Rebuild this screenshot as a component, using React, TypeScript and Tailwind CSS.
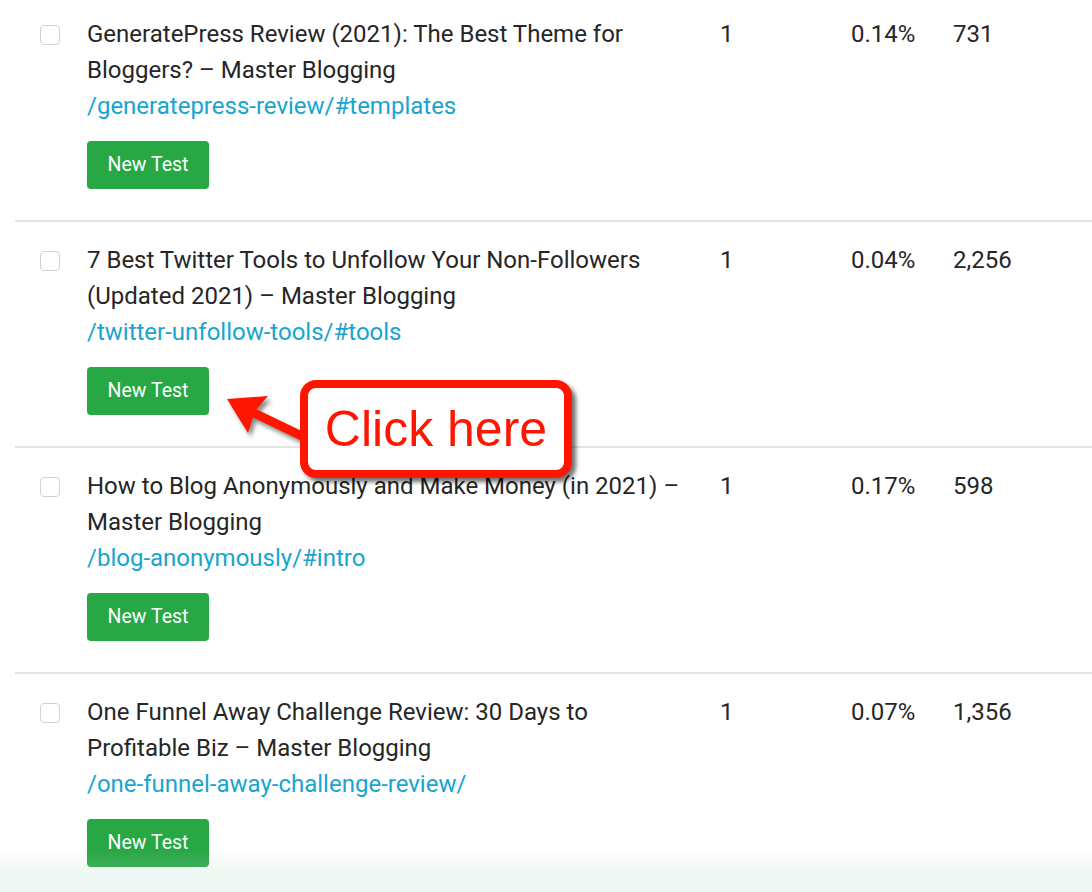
import React from 'react';

interface Post {
  title: string;
  path: string;
  count: string;
  ctr: string;
  views: string;
}

const posts: Post[] = [
  {
    title: 'GeneratePress Review (2021): The Best Theme for Bloggers? – Master Blogging',
    path: '/generatepress-review/#templates',
    count: '1',
    ctr: '0.14%',
    views: '731',
  },
  {
    title: '7 Best Twitter Tools to Unfollow Your Non-Followers (Updated 2021) – Master Blogging',
    path: '/twitter-unfollow-tools/#tools',
    count: '1',
    ctr: '0.04%',
    views: '2,256',
  },
  {
    title: 'How to Blog Anonymously and Make Money (in 2021) – Master Blogging',
    path: '/blog-anonymously/#intro',
    count: '1',
    ctr: '0.17%',
    views: '598',
  },
  {
    title: 'One Funnel Away Challenge Review: 30 Days to Profitable Biz – Master Blogging',
    path: '/one-funnel-away-challenge-review/',
    count: '1',
    ctr: '0.07%',
    views: '1,356',
  },
];

function PostRow({ post }: { post: Post }) {
  return (
    <div className="flex border-t-2 border-[#e4e4e4] pt-[20px] pb-[31px] text-[24px] leading-[36px] text-[#262626]">
      <div className="w-[72px] shrink-0 pl-[25px]">
        <div className="mt-[9px] h-[20px] w-[20px] rounded-[4px] border border-[#d2d2d2] bg-white" />
      </div>
      <div className="w-[633px] shrink-0">
        <div className="w-[600px]">{post.title}</div>
        <div className="text-[#17a5cf]">{post.path}</div>
        <button className="mt-[17px] flex h-[48px] w-[122px] items-center justify-center rounded-[4px] bg-[#28a745] text-[19.5px] text-white">
          New Test
        </button>
      </div>
      <div className="w-[131px] shrink-0">{post.count}</div>
      <div className="w-[102px] shrink-0">{post.ctr}</div>
      <div>{post.views}</div>
    </div>
  );
}

function Callout() {
  return (
    <>
      <svg
        className="absolute left-[215px] top-[385px] drop-shadow-[3px_4px_2px_rgba(0,0,0,0.45)]"
        width="100"
        height="65"
        viewBox="215 385 100 65"
      >
        <line x1="254" y1="413" x2="306" y2="438" stroke="#ff1500" strokeWidth="9" />
        <polygon points="227,399 268,396 255,411 248,433" fill="#ff1500" />
      </svg>
      <div className="absolute left-[300px] top-[380px] flex h-[98px] w-[272px] items-center justify-center rounded-[16px] border-[8px] border-[#ff1500] bg-white shadow-[4px_4px_4px_rgba(0,0,0,0.55)]">
        <span className="font-['Liberation_Sans',Arial,sans-serif] text-[50px] leading-none text-[#ff1500]">
          Click here
        </span>
      </div>
    </>
  );
}

export default function App() {
  return (
    <div className="relative h-[892px] w-[1092px] overflow-hidden bg-white font-['Roboto',sans-serif]">
      <div className="-mt-[6px] ml-[15px]">
        {posts.map((post) => (
          <PostRow key={post.path} post={post} />
        ))}
      </div>
      <Callout />
      <div className="pointer-events-none absolute bottom-0 left-0 h-[42px] w-full bg-gradient-to-b from-[rgba(172,217,194,0)] via-[rgba(172,217,194,0.2)] to-[rgba(172,217,194,0.2)]" />
    </div>
  );
}
